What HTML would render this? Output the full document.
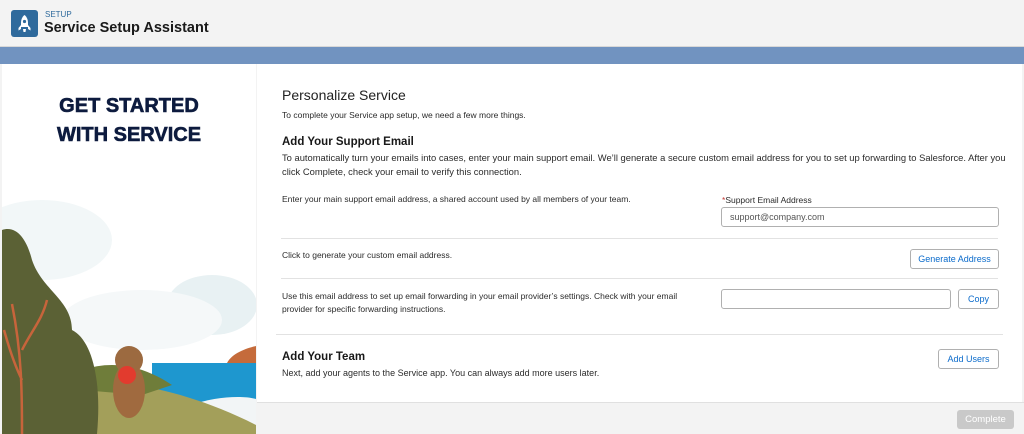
<!DOCTYPE html>
<html><head><style>
*{margin:0;padding:0;box-sizing:border-box}
body{width:1024px;height:434px;overflow:hidden;background:#f3f3f3;font-family:"Liberation Sans",Arial,sans-serif;color:#181818;position:relative}
.a{position:absolute;white-space:nowrap}
.hdr{left:0;top:0;width:1024px;height:47px;background:#f3f3f3;border-bottom:1px solid #d8d8d8}
.band{left:0;top:47px;width:1024px;height:17px;background:#7193c0}
.left{left:2px;top:64px;width:254px;height:370px;background:#fff;overflow:hidden}
.right{left:257px;top:64px;width:765px;height:338px;background:#fff}
.foot{left:257px;top:402px;width:767px;height:32px;background:#f3f3f3;border-top:1px solid #e0e0e0}
.t{font-size:8.5px;color:#2b2b2b}
.b{font-size:11.5px;font-weight:bold}
.inp{border:1px solid #b0b0b0;border-radius:3px;background:#fff;height:20px}
.btn{border:1px solid #b0b0b0;border-radius:3px;background:#fff;color:#0b6bcb;font-size:9px;text-align:center;line-height:18px;height:20px}
.hr{height:1px;background:#e2e2e2}
</style></head><body>
<div class="a hdr"></div>
<div class="a" style="left:11px;top:10px;width:27px;height:27px;background:#2f6a9c;border-radius:3px">
<svg width="27" height="27" viewBox="0 0 27 27"><path d="M13.5 5c2.5 2 3.5 5 3.5 8v4h-7v-4c0-3 1-6 3.5-8z" fill="#fff"/><circle cx="13.5" cy="11.5" r="1.6" fill="#2f6a9c"/><path d="M10 15l-2.5 3v2.5L10 19zM17 15l2.5 3v2.5L17 19z" fill="#fff"/><path d="M12 19h3l-.5 3h-2z" fill="#fff"/></svg></div>
<div class="a" style="left:45px;top:10px;font-size:8px;color:#2f6a9c">SETUP</div>
<div class="a" style="left:44px;top:20px;font-size:14.5px;font-weight:bold;color:#1a1a1a">Service Setup Assistant</div>
<div class="a band"></div>
<div class="a left">
<div class="a" style="left:0;width:254px;top:28px;text-align:center;font-size:20px;font-weight:900;color:#0d1b3e;line-height:29px;-webkit-text-stroke:0.6px #0d1b3e">GET STARTED<br>WITH SERVICE</div>
<svg class="a" style="left:0;top:136px" width="254" height="234" viewBox="0 0 254 234">
<ellipse cx="40" cy="40" rx="70" ry="40" fill="#f2f7f8"/>
<ellipse cx="210" cy="105" rx="45" ry="30" fill="#e8f1f3"/>
<ellipse cx="140" cy="120" rx="80" ry="30" fill="#f5f8f9"/>
<path d="M150 163h104v40h-104z" fill="#1e97cf"/>
<path d="M225 163c5-10 20-15 29-17v17z" fill="#c56b3b"/>
<path d="M190 205c20-8 50-10 64-6v35h-64z" fill="#f2f5f6"/>
<path d="M75 185c40-8 110 5 179 40v9H75z" fill="#a39f5a"/>
<path d="M80 170c30-10 60-5 90 15l-30 10-60-5z" fill="#6f7d3a"/>
<path d="M0 30c15-5 25 10 30 30 10 30 40 40 40 70 20 10 30 50 25 104H0z" fill="#5b6135"/>
<path d="M20 234c0-40 0-80-10-130M20 150c10-20 20-30 25-50M20 180c-10-20-15-40-18-50" stroke="#c7643b" stroke-width="2.5" fill="none"/>
<ellipse cx="127" cy="190" rx="16" ry="28" fill="#a06a3f"/>
<circle cx="127" cy="160" r="14" fill="#9c6a40"/>
<circle cx="125" cy="175" r="9" fill="#e23b2e"/>
</svg>
</div>
<div class="a right"></div>
<div class="a" style="left:282px;top:87px;font-size:14px;color:#222">Personalize Service</div>
<div class="a t" style="left:282px;top:110px">To complete your Service app setup, we need a few more things.</div>
<div class="a b" style="left:282px;top:136px">Add Your Support Email</div>
<div class="a t" style="left:282px;top:151px;line-height:13.5px;font-size:9.4px">To automatically turn your emails into cases, enter your main support email. We’ll generate a secure custom email address for you to set up forwarding to Salesforce. After you<br>click Complete, check your email to verify this connection.</div>
<div class="a t" style="left:282px;top:194px">Enter your main support email address, a shared account used by all members of your team.</div>
<div class="a t" style="left:722px;top:195px"><span style="color:#c23934">*</span>Support Email Address</div>
<div class="a inp" style="left:721px;top:207px;width:278px"></div>
<div class="a t" style="left:730px;top:212px;color:#555;font-size:9px">support@company.com</div>
<div class="a hr" style="left:281px;top:238px;width:717px"></div>
<div class="a t" style="left:282px;top:250px">Click to generate your custom email address.</div>
<div class="a btn" style="left:910px;top:249px;width:89px">Generate Address</div>
<div class="a hr" style="left:281px;top:278px;width:717px"></div>
<div class="a t" style="left:282px;top:290px;line-height:13px">Use this email address to set up email forwarding in your email provider’s settings. Check with your email<br>provider for specific forwarding instructions.</div>
<div class="a inp" style="left:721px;top:289px;width:230px"></div>
<div class="a btn" style="left:958px;top:289px;width:41px">Copy</div>
<div class="a hr" style="left:276px;top:334px;width:727px"></div>
<div class="a b" style="left:282px;top:351px">Add Your Team</div>
<div class="a t" style="left:282px;top:368px;font-size:9px">Next, add your agents to the Service app. You can always add more users later.</div>
<div class="a btn" style="left:938px;top:349px;width:61px">Add Users</div>
<div class="a foot"></div>
<div class="a" style="left:957px;top:410px;width:57px;height:19px;background:#c9c9c9;border-radius:3px;color:#fff;font-size:9.5px;text-align:center;line-height:19px">Complete</div>
</body></html>
